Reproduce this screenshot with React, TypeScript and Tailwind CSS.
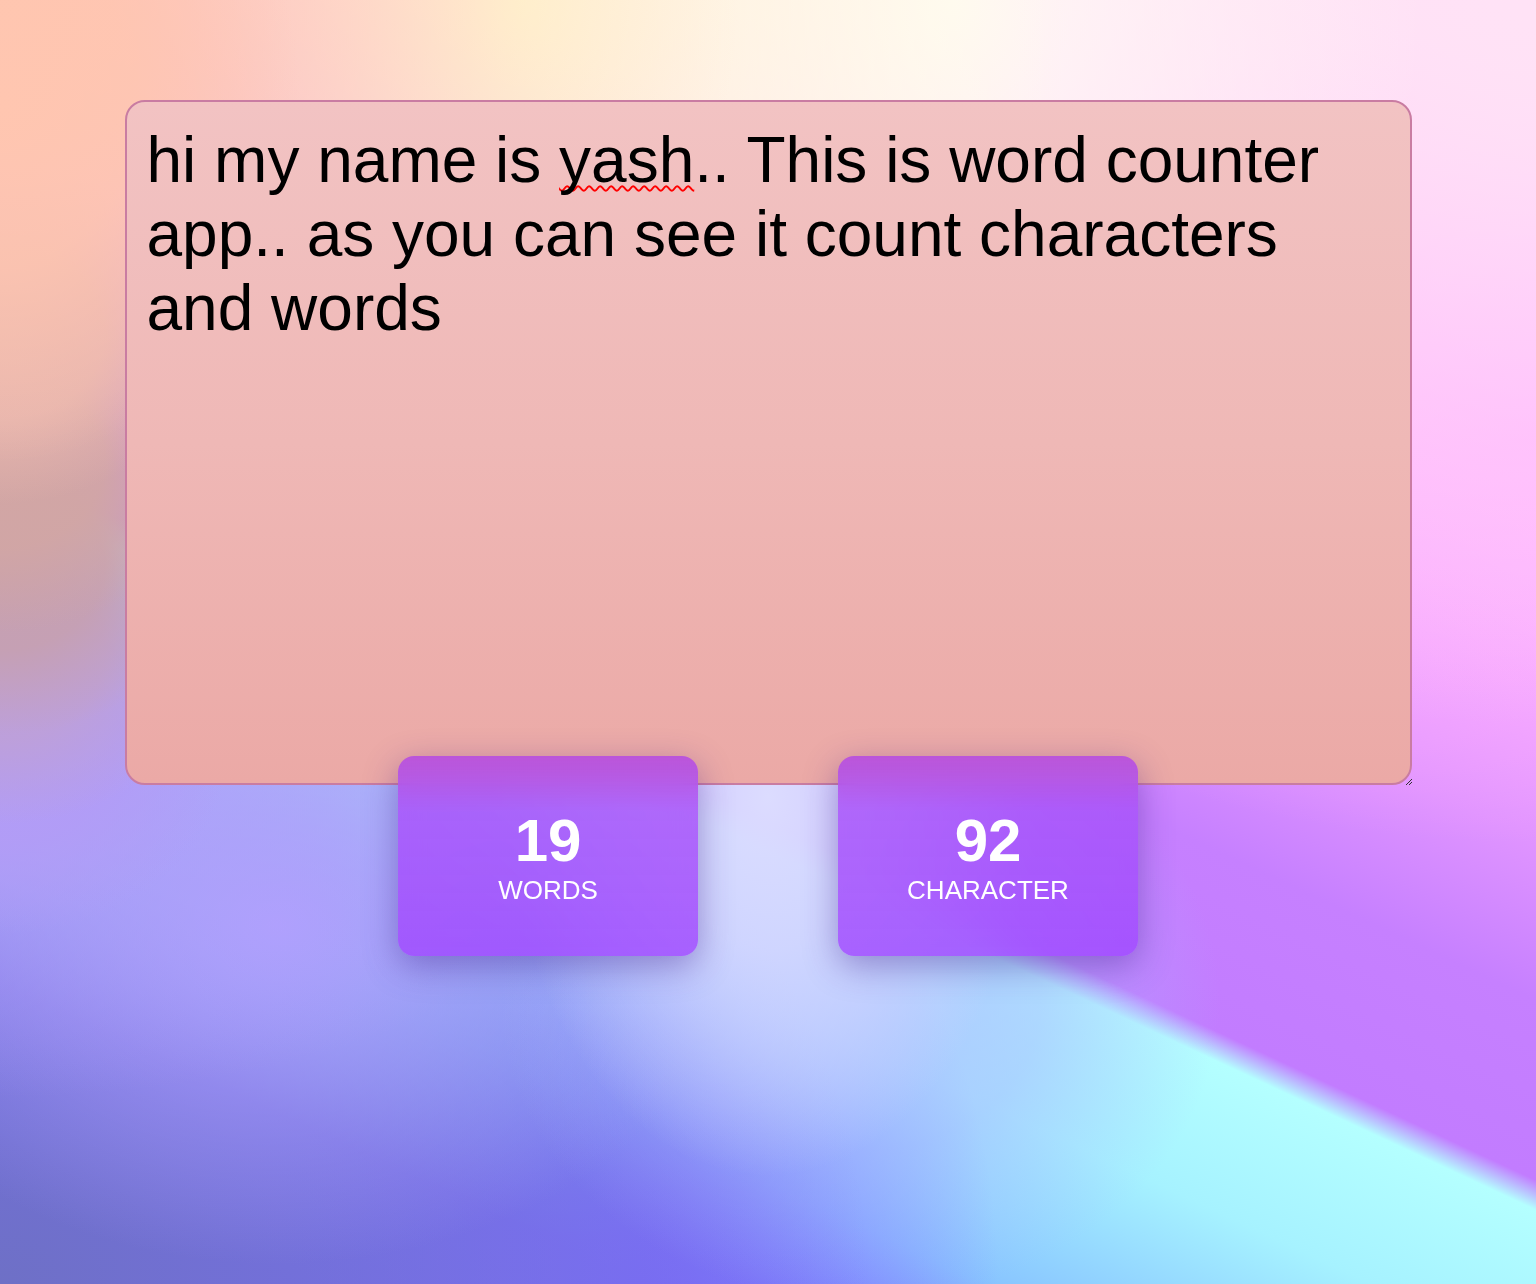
import React from 'react';

const text =
  'hi my name is yash.. This is word counter app.. as you can see it count characters and words';

const countWords = (s: string) => s.split(/\s+/).filter((w) => w.length > 0).length;

const StatCard = ({ value, label }: { value: number; label: string }) => (
  <div className="flex h-[200px] w-[300px] flex-col items-center justify-center rounded-2xl bg-[linear-gradient(180deg,rgba(182,78,222,0.92)_0%,rgba(168,84,250,0.85)_28%,rgba(160,72,255,0.82)_100%)] text-white shadow-[0_10px_34px_rgba(70,30,140,0.42)] backdrop-blur-md">
    <div className="text-[60px] font-bold leading-[normal]">{value}</div>
    <div className="text-[26px] leading-[normal]">{label}</div>
  </div>
);

export default function App() {
  const words = countWords(text);
  const chars = 92;

  return (
    <div className="min-h-screen w-full bg-[#c080ff] bg-[radial-gradient(ellipse_300px_360px_at_0%_8%,#ffc6b0_0%,rgba(255,198,176,0.8)_45%,rgba(255,198,176,0)_100%),radial-gradient(ellipse_210px_170px_at_0%_26%,#e8b6ae_0%,rgba(232,182,174,0.9)_50%,rgba(232,182,174,0)_100%),radial-gradient(ellipse_210px_170px_at_0%_36%,#d2a6a4_0%,rgba(210,166,164,0.9)_50%,rgba(210,166,164,0)_100%),radial-gradient(ellipse_210px_170px_at_0%_44%,#c6a0b0_0%,rgba(198,160,176,0.9)_50%,rgba(198,160,176,0)_100%),radial-gradient(ellipse_210px_170px_at_0%_51%,#bea0d8_0%,rgba(190,160,216,0.9)_50%,rgba(190,160,216,0)_100%),radial-gradient(ellipse_230px_190px_at_0%_58%,#b29cf6_0%,rgba(178,156,246,0.9)_50%,rgba(178,156,246,0)_100%),radial-gradient(at_0%_0%,#ffc6ae_0px,transparent_34%),radial-gradient(at_34%_0%,#ffffd8_0px,transparent_38%),radial-gradient(at_62%_0%,#fffaf4_0px,transparent_35%),radial-gradient(at_100%_0%,#ffe2f6_0px,transparent_40%),radial-gradient(at_100%_34%,#ffaeff_0px,transparent_34%),radial-gradient(ellipse_260px_380px_at_50%_62%,#dcdcff_0%,rgba(214,216,255,0.85)_40%,rgba(200,208,255,0)_100%),radial-gradient(ellipse_360px_300px_at_56%_78%,rgba(176,196,255,0.9)_0%,rgba(170,180,255,0.5)_50%,rgba(170,180,255,0)_100%),radial-gradient(at_0%_60%,#b2a0fa_0px,transparent_30%),radial-gradient(at_18%_72%,#aea0ff_0px,transparent_26%),radial-gradient(at_0%_100%,#6e70c6_0px,transparent_40%),radial-gradient(at_42%_100%,#7c6cff_0px,transparent_28%),linear-gradient(25deg,#7c6cff_0%,#7e74ff_15%,#88c4ff_23%,#a6f2ff_32%,#b4ffff_39.5%,#c27cff_41%,#c680ff_50%,#e094ff_58%,#f2a6ff_66%,#ffc0ff_75%,#ffe4f4_100%)] font-['Liberation_Sans',Arial,sans-serif]">
      <div className="flex flex-col items-center pt-[100px] pb-[40px]">
        <div className="relative h-[685px] w-[1287px] rounded-[20px] border-2 border-[#c97ca2] bg-[linear-gradient(180deg,#f2c3c3_0%,#efb8b6_50%,#eba9a6_100%)] px-5 py-[21px]">
          <div className="text-[64px] leading-[normal] text-black">
            hi my name is{' '}
            <span className="underline decoration-[#ff0000] decoration-wavy decoration-[1.5px] underline-offset-[3px] [text-decoration-skip-ink:none]">
              yash
            </span>
            .. This is word counter app.. as you can see it count characters and words
          </div>
          <svg
            className="absolute -bottom-[3px] -right-[3px]"
            width="9"
            height="9"
            viewBox="0 0 9 9"
          >
            <path d="M8 2 L2 8 M8 5 L5 8" stroke="#333" strokeWidth="1" />
          </svg>
        </div>
        <div className="relative z-10 -mt-[29px] flex justify-center gap-[140px]">
          <StatCard value={words} label="WORDS" />
          <StatCard value={chars} label="CHARACTER" />
        </div>
      </div>
    </div>
  );
}
